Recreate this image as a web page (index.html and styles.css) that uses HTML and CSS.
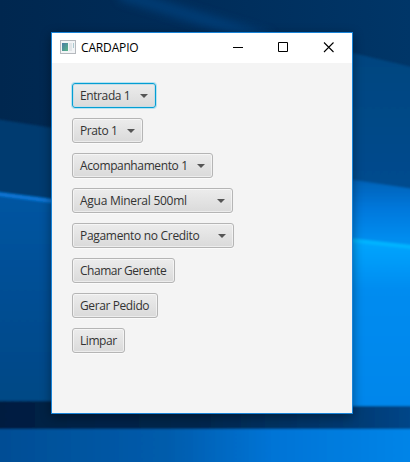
FILE: index.html
```html
<!DOCTYPE html>
<html lang="pt">
<head>
<meta charset="utf-8">
<title>CARDAPIO</title>
<link rel="stylesheet" href="styles.css">
</head>
<body>
<svg class="wallpaper" width="410" height="462" viewBox="0 0 410 462" aria-hidden="true">
  <defs>
    <linearGradient id="sky" x1="0" x2="1" y1="0" y2="0"><stop offset="0" stop-color="#00274f"/><stop offset=".5" stop-color="#002d5a"/><stop offset="1" stop-color="#003668"/></linearGradient>
    <linearGradient id="haze" x1="0" x2="0" y1="0" y2="1"><stop offset="0" stop-color="#00457f"/><stop offset="1" stop-color="#004c90"/></linearGradient>
    <linearGradient id="left" x1="0" x2="0" y1="0" y2="1"><stop offset="0" stop-color="#0055a2"/><stop offset="1" stop-color="#004784"/></linearGradient>
    <linearGradient id="beam" x1="0" x2="0" y1="0" y2="1"><stop offset="0" stop-color="#0060b4"/><stop offset=".4" stop-color="#0078dc"/><stop offset="1" stop-color="#0098f8"/></linearGradient>
    <linearGradient id="right" x1="0" x2="0" y1="0" y2="1"><stop offset="0" stop-color="#00a8ff"/><stop offset=".3" stop-color="#008cf0"/><stop offset="1" stop-color="#0086ea"/></linearGradient>
    <linearGradient id="band" x1="0" x2="1" y1="0" y2="0"><stop offset="0" stop-color="#001d40"/><stop offset=".5" stop-color="#00284f"/><stop offset=".85" stop-color="#003c76"/><stop offset="1" stop-color="#004a90"/></linearGradient>
    <linearGradient id="floor" x1="0" x2="1" y1="0" y2="0"><stop offset="0" stop-color="#004c92"/><stop offset=".42" stop-color="#005cac"/><stop offset=".65" stop-color="#0074d6"/><stop offset="1" stop-color="#0087ea"/></linearGradient>
    <filter id="soft" x="-10%" y="-10%" width="120%" height="120%"><feGaussianBlur stdDeviation="1.3"/></filter>
    <filter id="softer" x="-20%" y="-50%" width="140%" height="200%"><feGaussianBlur stdDeviation="5"/></filter>
  </defs>
  <rect width="410" height="462" fill="url(#sky)"/>
  <path d="M120-6Q200 18 270 40" fill="none" stroke="#004483" stroke-width="12" opacity=".7" filter="url(#softer)"/>
  <g filter="url(#soft)">
    <path d="M340 50L420 69V200H340Z" fill="url(#haze)"/>
    <path d="M-10 118L60 129V205H-10Z" fill="#003a70"/>
    <path d="M-10 193L60 202V410H-10Z" fill="url(#left)"/>
    <path d="M-10 193L60 202" stroke="#0875d4" stroke-width="4"/>
    <path d="M340 178L420 190V255H340Z" fill="url(#beam)"/>
    <path d="M340 238L420 247V410H340Z" fill="url(#right)"/>
    <path d="M340 239L420 248" stroke="#00b4ff" stroke-width="4"/>
    <path d="M-20 401H200V406H430V440H-20Z" fill="url(#band)"/>
    <path d="M-20 429H430V475H-20Z" fill="url(#floor)"/>
  </g>
</svg>
<main class="window">
  <header class="titlebar">
    <svg class="app-icon" width="16" height="14" viewBox="0 0 16 14" aria-hidden="true">
      <defs><linearGradient id="pane" x2="1" y2="1"><stop stop-color="#487ca5"/><stop offset="1" stop-color="#59b588"/></linearGradient></defs>
      <rect x=".5" y=".5" width="15" height="13" fill="#f2f4f6" stroke="#b5b9be"/>
      <rect x="2" y="3" width="6" height="8" fill="url(#pane)"/>
      <rect x="9" y="3" width="3" height="8" fill="#e1e5e8"/>
      <rect x="13" y="3" width="1" height="5" fill="#acc9cf"/>
    </svg>
    <h1 class="title">CARDAPIO</h1>
    <svg class="controls" width="135" height="30" viewBox="0 0 135 30" fill="none" stroke="#000" aria-hidden="true">
      <path d="M16 14.500h10"/>
      <path d="M61.500 9.500h9v9h-9z"/>
      <path d="M107 9.500l9.500 9.500M116.500 9.500l-9.500 9.500" stroke-width="1.1"/>
    </svg>
  </header>
  <div class="content">
    <button class="control combo entrada focused"><span>Entrada 1</span></button>
    <button class="control combo prato"><span>Prato 1</span></button>
    <button class="control combo acompanhamento"><span>Acompanhamento 1</span></button>
    <button class="control combo bebida"><span>Agua Mineral 500ml</span></button>
    <button class="control combo pagamento"><span>Pagamento no Credito</span></button>
    <button class="control chamar"><span>Chamar Gerente</span></button>
    <button class="control gerar"><span>Gerar Pedido</span></button>
    <button class="control limpar"><span>Limpar</span></button>
  </div>
</main>
</body>
</html>
```
FILE: styles.css
```css
* { box-sizing: border-box; }
body {
  margin: 0;
  width: 410px;
  height: 462px;
  padding: 32px 0 0 51px;
  overflow: hidden;
  font-family: "Open Sans", "Noto Sans", sans-serif;
}
.wallpaper { position: absolute; inset: 0; z-index: -1; }
.window {
  display: flex;
  flex-direction: column;
  width: 302px;
  height: 382px;
  background: #f4f4f4;
  border: 1px solid #1883d7;
  box-shadow: 0 3px 10px rgba(0, 0, 0, .4);
}
.titlebar {
  display: flex;
  align-items: center;
  height: 30px;
  padding-left: 8px;
  background: #fff;
}
.app-icon { margin-top: -2px; }
.title {
  margin: 0 0 0 5px;
  font-size: 12px;
  font-weight: 400;
  line-height: 16px;
  letter-spacing: -.15px;
  color: #000;
}
.controls { margin-left: auto; }
.content {
  display: flex;
  flex-direction: column;
  align-items: flex-start;
  gap: 10px;
  padding: 20px;
}
.control {
  display: flex;
  align-items: center;
  justify-content: space-between;
  height: 25px;
  padding: 0 7px;
  border: 1px solid #b5b5b5;
  border-radius: 3px;
  background: linear-gradient(#ececec, #dadada);
  box-shadow: inset 0 0 0 1px rgba(255, 255, 255, .5), 0 1px 0 #fbfbfb;
  font: 12px/16px "Open Sans", "Noto Sans", sans-serif;
  color: #333;
  white-space: nowrap;
}
.combo::after {
  content: "";
  border: 4px solid transparent;
  border-top-color: #555;
  border-bottom: 0;
}
.focused {
  border-color: #039ed3;
  box-shadow: 0 0 0 1px #b5e2f1, inset 0 0 0 1px #c5dce5;
}
.entrada { width: 84px; letter-spacing: -.4px; }
.prato { width: 71px; letter-spacing: -.42px; }
.acompanhamento { width: 141px; letter-spacing: -.38px; }
.bebida { width: 161px; letter-spacing: -.27px; }
.pagamento { width: 162px; letter-spacing: -.31px; }
.chamar { width: 103px; letter-spacing: -.48px; }
.gerar { width: 86px; letter-spacing: -.4px; }
.limpar { width: 53px; letter-spacing: -.45px; }
```
